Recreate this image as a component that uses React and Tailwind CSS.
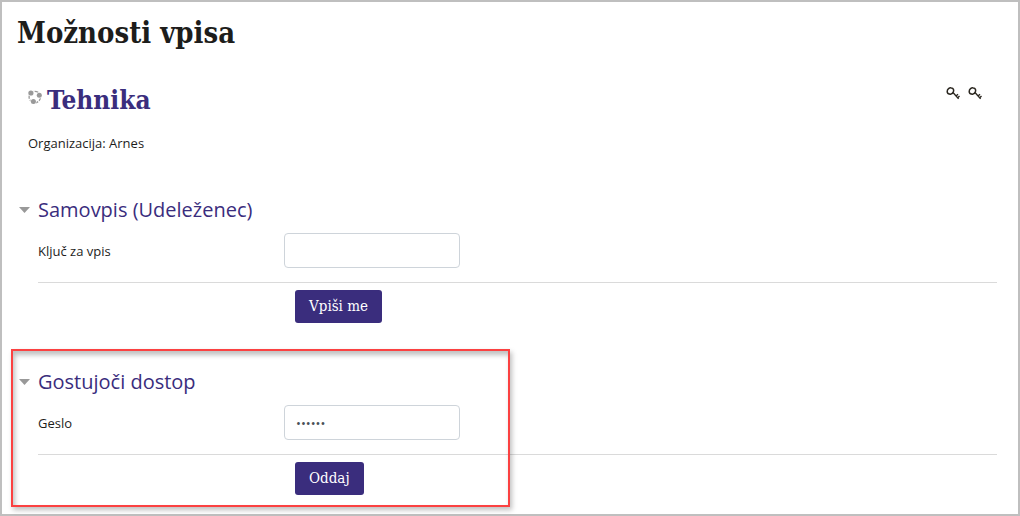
import React, { useState } from 'react';

const serif = "font-['DejaVu_Serif_Condensed','DejaVu_Serif',serif]";
const sans = "font-['Open_Sans','Noto_Sans',sans-serif]";

function CourseIcon() {
  return (
    <svg className="w-[14px] h-[15px] text-[#999]" viewBox="0 0 14 15" fill="none" aria-hidden="true">
      <circle cx="6.8" cy="7" r="5.7" stroke="currentColor" strokeWidth="1.3" strokeDasharray="4 1.2" />
      <circle cx="2.9" cy="3" r="3.2" fill="#fff" />
      <circle cx="11.3" cy="5.3" r="3.1" fill="#fff" />
      <circle cx="5.4" cy="11.6" r="3.1" fill="#fff" />
      <circle cx="2.9" cy="3" r="2.6" fill="currentColor" />
      <circle cx="11.3" cy="5.3" r="2.5" fill="currentColor" />
      <circle cx="5.4" cy="11.6" r="2.5" fill="currentColor" />
    </svg>
  );
}

function KeyIcon({ title }) {
  return (
    <svg className="w-[14px] h-[14px]" viewBox="0 0 14 14" fill="none" role="img" aria-label={title}>
      <path d="M1.2 5.4C1.2 3 3.4 1.6 5.3 1.9C7.6 2.2 8 4.2 7.4 5.8C6.8 7.6 5 8.4 3.4 8C2 7.7 1.2 6.7 1.2 5.4Z" stroke="#2b2720" strokeWidth="1.5" />
      <path d="M7 6.5L12.6 12.9M10 10L12 8.2M11.8 11.7L13.5 10" stroke="#2b2720" strokeWidth="1.4" />
    </svg>
  );
}

function EnrolSection({ id, title, label, submit, initialValue = '', highlighted = false }) {
  const [open, setOpen] = useState(true);
  const [value, setValue] = useState(initialValue);

  return (
    <form className="relative pl-4 pr-[21px]" onSubmit={(e) => e.preventDefault()}>
      <h3>
        <button
          type="button"
          aria-expanded={open}
          onClick={() => setOpen(!open)}
          className="flex items-center gap-2 pl-px h-7 text-xl leading-7 text-[#3a2d7d]"
        >
          <svg className={`w-[11px] h-[6px] ${open ? '' : '-rotate-90'}`} viewBox="0 0 11 6" aria-hidden="true">
            <path d="M0 0H11L5.5 6Z" fill="#999" />
          </svg>
          {title}
        </button>
      </h3>

      {open && (
        <div className="pl-5 pt-[9px]">
          <div className="grid grid-cols-[246px_1fr] items-center pb-[14px] border-b border-[#dadada]">
            <label htmlFor={id} className="text-[13px] leading-5 text-[#1d1d1b]">{label}</label>
            <input
              id={id}
              type="password"
              value={value}
              onChange={(e) => setValue(e.target.value)}
              className="w-44 h-[35px] px-[11px] rounded border border-[#ced4da] bg-white text-[13px] text-[#495057] outline-none focus:border-[#3a2d7d]"
            />
          </div>
          <div className="pl-[257px] pt-[7px]">
            <button type="submit" className={`${serif} h-[33px] px-[14px] rounded-[3px] bg-[#3a2d7d] text-[15px] text-white`}>
              {submit}
            </button>
          </div>
        </div>
      )}

      {highlighted && (
        <div className="absolute -top-[19px] left-[9px] w-[499px] -bottom-[12px] border-2 border-[#fb4141] shadow-[2px_3px_5px_rgba(0,0,0,0.25),inset_2px_4px_5px_rgba(0,0,0,0.25)] pointer-events-none" />
      )}
    </form>
  );
}

export default function App() {
  return (
    <main className={`${sans} min-h-screen border-2 border-[#bfbfbf] bg-white text-[#1d1d1b]`}>
      <h1 className={`${serif} pt-[11px] pl-[15px] text-[29px] leading-10 font-bold`}>Možnosti vpisa</h1>

      <section className="pt-[31px] pl-[26px] pr-9">
        <div className="flex items-start justify-between">
          <h2 className={`${serif} flex items-start gap-[5px] text-[26px] leading-8 font-bold text-[#3a2d7d]`}>
            <span className="pt-[6px]"><CourseIcon /></span>
            <a href="#tehnika">Tehnika</a>
          </h2>
          <div className="flex gap-2 pt-[2px]">
            <KeyIcon title="Samovpis" />
            <KeyIcon title="Gostujoči dostop" />
          </div>
        </div>
        <p className="pt-[17px] text-[13px] leading-5">Organizacija: Arnes</p>
      </section>

      <div className="pt-[43px] flex flex-col gap-[45px]">
        <EnrolSection id="kljuc" title="Samovpis (Udeleženec)" label="Ključ za vpis" submit="Vpiši me" />
        <EnrolSection id="geslo" title="Gostujoči dostop" label="Geslo" submit="Oddaj" initialValue="gost12" highlighted />
      </div>
    </main>
  );
}
